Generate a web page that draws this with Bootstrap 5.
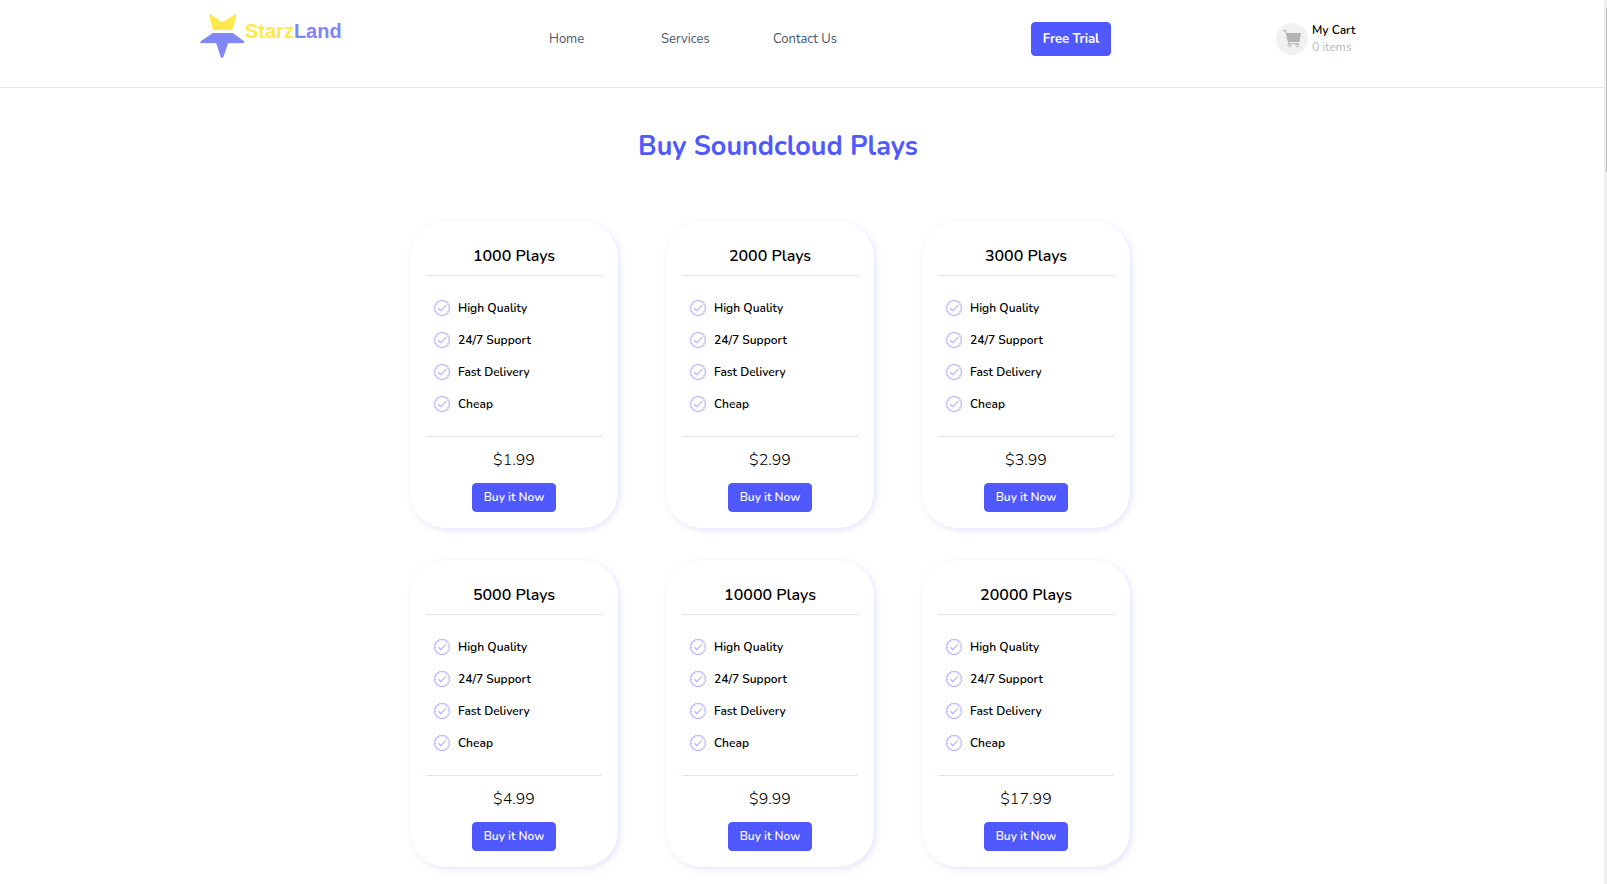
<!DOCTYPE html>
<html lang="en">
<head>
<meta charset="utf-8">
<meta name="viewport" content="width=device-width, initial-scale=1">
<title>StarzLand - Buy Soundcloud Plays</title>
<link rel="stylesheet" href="https://cdn.jsdelivr.net/npm/bootstrap@5.3.0/dist/css/bootstrap.min.css">
<style>
  body { font-family: Nunito, Lato, sans-serif; color: #000; background: #fff; padding-right: 3px; }
  .site-header { border-bottom: 1px solid #e3e3f1; min-height: 88px; }
  .page-wrap { margin: 0 248px 0 200px; }
  .header-row { display: grid; grid-template-columns: 349fr 482fr 245fr 80fr; padding-top: 14px; }
  .brand-text { font: bold 20px/26px "Liberation Sans", Arial, sans-serif; color: #8087f5; }
  .brand-text span { color: #ffe94a; }
  .site-nav { display: grid; grid-template-columns: repeat(3, 112px); font-size: 13px; line-height: 20px; padding-top: 15px; }
  .site-nav a { color: #4a5568; }
  .btn-brand { --bs-btn-color: #fff; --bs-btn-bg: #5059ff; --bs-btn-border-color: #5059ff; --bs-btn-hover-color: #fff; --bs-btn-hover-bg: #3f48e6; --bs-btn-hover-border-color: #3f48e6; --bs-btn-border-radius: 4px; }
  .btn-trial { --bs-btn-padding-y: 6px; --bs-btn-padding-x: 0; --bs-btn-font-size: 13px; width: 80px; line-height: 20px; font-weight: 700; }
  .btn-buy { --bs-btn-padding-y: 4px; --bs-btn-padding-x: 0; --bs-btn-font-size: 12px; width: 84px; line-height: 19px; font-weight: 600; }
  .cart-disc { width: 32px; height: 32px; background: #f1f1f1; }
  .cart-label { font-size: 12px; line-height: 17px; color: #b8b8b8; }
  .cart-label strong { color: #000; font-weight: 600; }
  main { padding: 41px 0 16px; }
  .page-title { font-size: 27px; line-height: 36px; font-weight: 700; color: #5059ff; margin-bottom: 56px; }
  .plans { max-width: 736px; column-gap: 48px; row-gap: 32px; }
  .plan { flex: 0 0 208px; border-radius: 36px; background: #fff; box-shadow: 2px 2px 6px rgba(80, 89, 255, .16); }
  .plan h2 { font-size: 16px; line-height: 24px; font-weight: 600; padding: 7px 0; border-bottom: 1px solid #e2e5ef; }
  .plan ul { font-size: 12px; line-height: 16px; font-weight: 600; gap: 16px; padding: 24px 8px; border-bottom: 1px solid #dfe5f1; }
  .price { font-size: 16px; line-height: 24px; font-weight: 300; padding: 11px 0; }
  .scroll-track { position: fixed; top: 0; right: 0; bottom: 0; width: 3px; background: #f0f0f0; }
  .scroll-thumb { width: 1px; height: 164px; margin: 8px 0 0 2px; background: #bcbcbc; }
</style>
</head>
<body>
<svg class="d-none" aria-hidden="true">
  <symbol id="tick" viewBox="0 0 16 16">
    <path d="M8 1.2A1.9 1.9 0 0 1 11.4 2.1 1.9 1.9 0 0 1 13.9 4.6 1.9 1.9 0 0 1 14.8 8 1.9 1.9 0 0 1 13.9 11.4 1.9 1.9 0 0 1 11.4 13.9 1.9 1.9 0 0 1 8 14.8 1.9 1.9 0 0 1 4.6 13.9 1.9 1.9 0 0 1 2.1 11.4 1.9 1.9 0 0 1 1.2 8 1.9 1.9 0 0 1 2.1 4.6 1.9 1.9 0 0 1 4.6 2.1 1.9 1.9 0 0 1 8 1.2Z" fill="none" stroke="#bdc0fb" stroke-width="1.2"/>
    <path d="M4.4 8.3 6.8 10.6 12 5.4" fill="none" stroke="#b0b4fb" stroke-width="1.2"/>
  </symbol>
</svg>

<header class="site-header">
  <div class="page-wrap"><div class="header-row">
    <a href="#" class="d-flex text-decoration-none" aria-label="StarzLand">
      <svg width="45" height="44" viewBox="0 0 45 44" aria-hidden="true">
        <path d="M10 .5 22.3 8.7 36 .5 32.2 15.5H13.4L9.5 1Z" fill="#ffe94a" stroke="#ffe94a" stroke-linejoin="round"/>
        <path d="M12.8 19.5H32.8L44 27.8 43.3 28.7H27.8L22.8 43.2H21.2L16.6 28.7H.8L.8 27.8Z" fill="#8087f5" stroke="#8087f5" stroke-linejoin="round"/>
      </svg>
      <div class="brand-text pt-1"><span>Starz</span>Land</div>
    </a>
    <nav class="site-nav" aria-label="Main">
      <a href="#" class="text-decoration-none">Home</a>
      <a href="#" class="text-decoration-none">Services</a>
      <a href="#" class="text-decoration-none">Contact Us</a>
    </nav>
    <div class="pt-2"><button type="button" class="btn btn-brand btn-trial">Free Trial</button></div>
    <a href="#" class="d-flex align-items-center align-self-start gap-1 text-decoration-none text-nowrap pt-2">
      <span class="cart-disc rounded-circle d-flex align-items-center justify-content-center">
        <svg width="20" height="20" viewBox="0 0 20 20" fill="none" aria-hidden="true">
          <path d="M4.4 4H19L17.4 13H6.8Z" fill="#b3b3b3"/>
          <path d="M1 1.6H3.7L6.9 14.8H17" stroke="#b3b3b3" stroke-width="1.1"/>
          <circle cx="7.5" cy="16.4" r="1.4" fill="#f1f1f1" stroke="#b3b3b3"/>
          <circle cx="15.4" cy="16.4" r="1.4" fill="#f1f1f1" stroke="#b3b3b3"/>
        </svg>
      </span>
      <span class="cart-label"><strong class="d-block">My Cart</strong>0 items</span>
    </a>
  </div></div>
</header>

<main>
  <div class="page-wrap">
    <h1 class="page-title text-center">Buy Soundcloud Plays</h1>
    <div class="plans d-flex flex-wrap justify-content-center mx-auto pe-3" id="plans"></div>
  </div>
</main>
<div class="scroll-track" aria-hidden="true"><div class="scroll-thumb"></div></div>

<script src="https://cdn.jsdelivr.net/npm/bootstrap@5.3.0/dist/js/bootstrap.bundle.min.js"></script>
<script>
  const plans = [[1000, '1.99'], [2000, '2.99'], [3000, '3.99'], [5000, '4.99'], [10000, '9.99'], [20000, '17.99']];
  const features = ['High Quality', '24/7 Support', 'Fast Delivery', 'Cheap'];
  const items = features.map(f => `<li class="d-flex align-items-center gap-2"><svg width="16" height="16" aria-hidden="true"><use href="#tick"/></svg>${f}</li>`).join('');
  document.getElementById('plans').innerHTML = plans.map(([n, price]) => `
    <article class="plan p-3 text-center">
      <h2 class="mb-0">${n} Plays</h2>
      <ul class="list-unstyled d-flex flex-column mb-0">${items}</ul>
      <p class="price mb-0">$${price}</p>
      <button type="button" class="btn btn-brand btn-buy">Buy it Now</button>
    </article>`).join('');
</script>
</body>
</html>
